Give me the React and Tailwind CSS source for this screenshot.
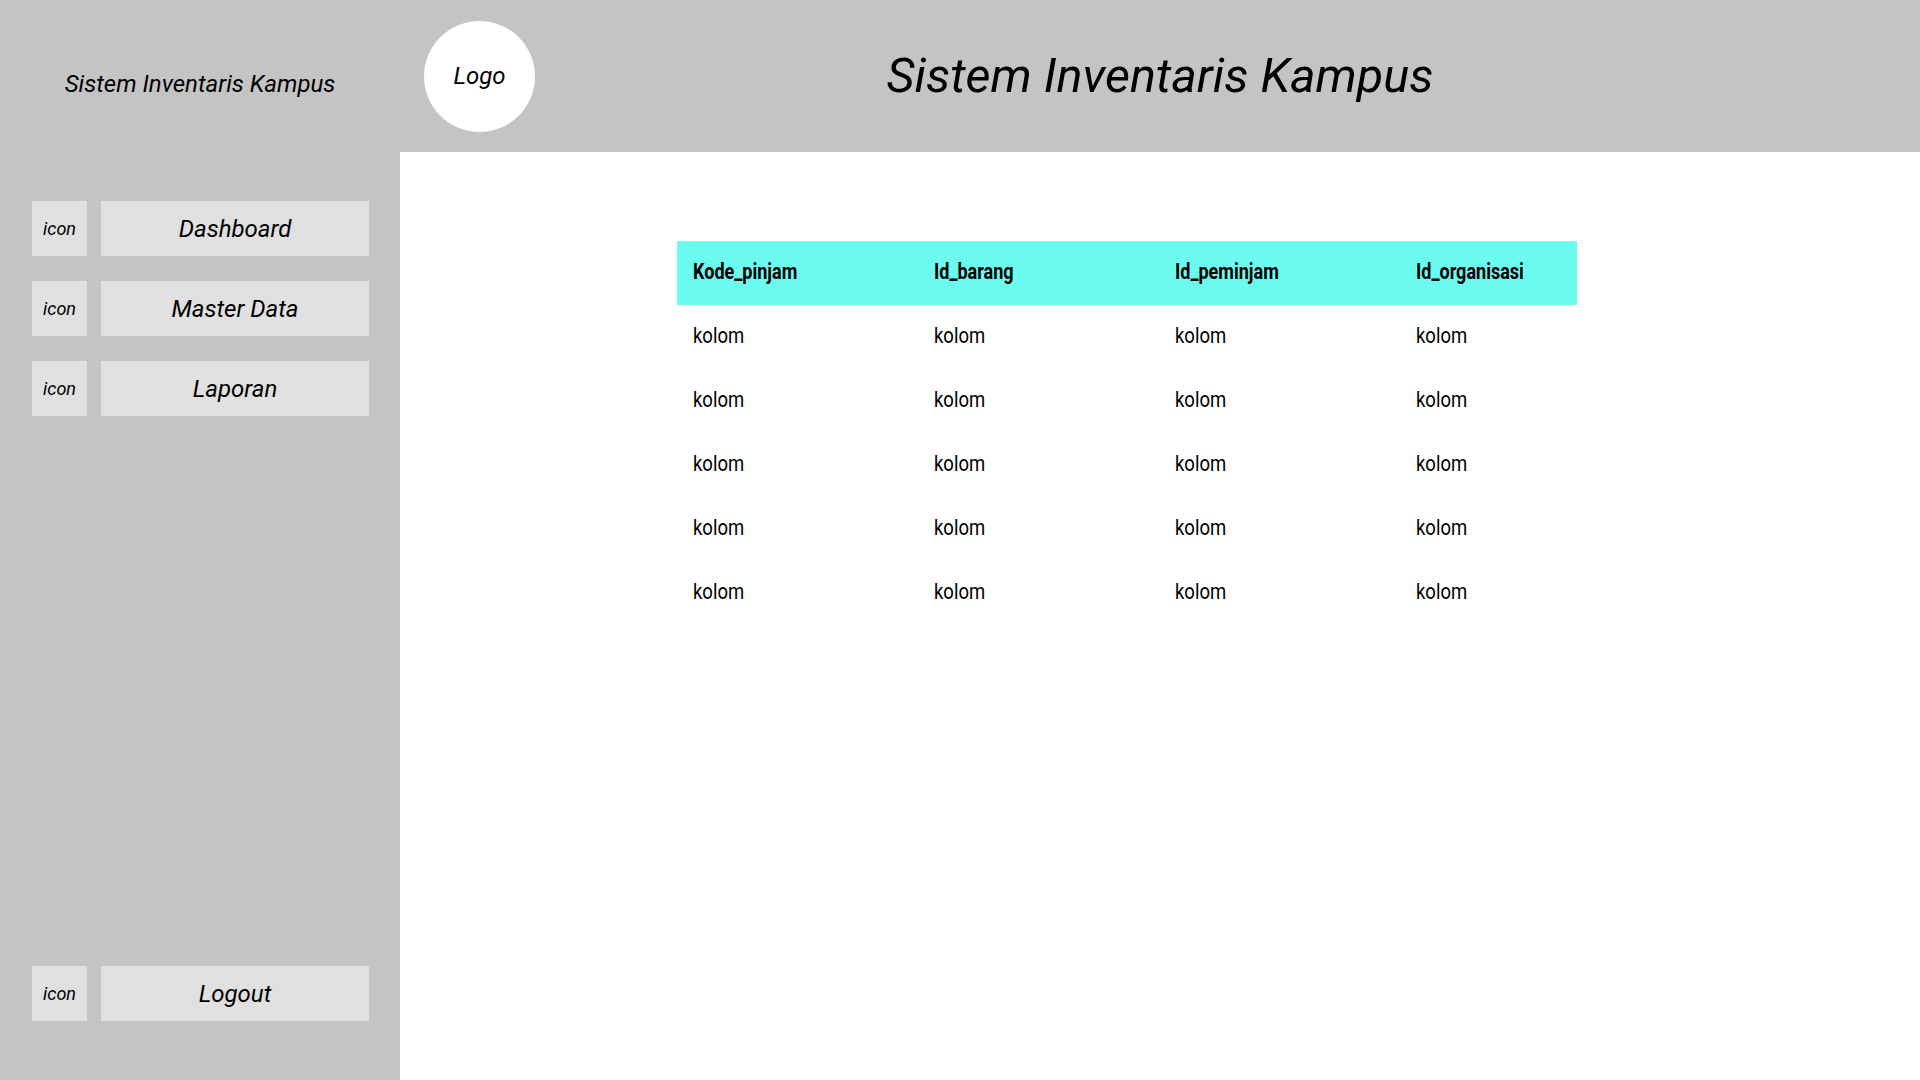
import React from 'react';

const menu = ['Dashboard', 'Master Data', 'Laporan'];
const kolomKolom = ['Kode_pinjam', 'Id_barang', 'Id_peminjam', 'Id_organisasi'];
const baris = [1, 2, 3, 4, 5];

function NavItem({ label }) {
  return (
    <div className="flex items-center gap-[14px]">
      <div className="w-[55px] h-[55px] bg-[#e0e0e0] flex items-center justify-center italic text-[18px] text-black">
        icon
      </div>
      <div className="w-[268px] h-[55px] bg-[#e0e0e0] flex items-center justify-center italic text-[24px] text-black">
        {label}
      </div>
    </div>
  );
}

export default function App() {
  return (
    <div
      className="flex w-full h-[1080px] overflow-hidden bg-white"
      style={{ fontFamily: 'Roboto, "Liberation Sans", sans-serif' }}
    >
      {/* Sidebar */}
      <aside className="w-[400px] shrink-0 h-full bg-[#c4c4c4] flex flex-col">
        <div className="h-[152px] flex items-center justify-center pt-[15px] italic text-[24px] text-black">
          Sistem Inventaris Kampus
        </div>
        <div className="flex flex-col gap-[25px] pl-[32px] pt-[49px]">
          {menu.map((m) => (
            <NavItem key={m} label={m} />
          ))}
        </div>
        <div className="mt-auto pl-[32px] pb-[59px]">
          <NavItem label="Logout" />
        </div>
      </aside>

      {/* Right side */}
      <div className="flex-1 flex flex-col">
        <header className="h-[152px] bg-[#c4c4c4] grid grid-cols-[1fr_auto_1fr] items-center">
          <div className="pl-[24px]">
            <div className="w-[111px] h-[111px] rounded-full bg-white flex items-center justify-center italic text-[24px] text-black">
              Logo
            </div>
          </div>
          <h1 className="italic text-[48.5px] text-black leading-none">Sistem Inventaris Kampus</h1>
          <div />
        </header>

        <main className="flex-1 bg-white pt-[89px] pl-[277px]">
          <table className="w-[900px] table-fixed border-collapse text-black">
            <colgroup>
              <col className="w-[241px]" />
              <col className="w-[241px]" />
              <col className="w-[241px]" />
              <col />
            </colgroup>
            <thead>
              <tr className="bg-[#6cfbef] h-[64px]">
                {kolomKolom.map((k) => (
                  <th key={k} className="text-left font-bold pl-[16px] whitespace-nowrap">
                    <span className="inline-block origin-left scale-x-[0.82] text-[22px] leading-none">{k}</span>
                  </th>
                ))}
              </tr>
            </thead>
            <tbody>
              {baris.map((b) => (
                <tr key={b} className="h-[64px]">
                  {kolomKolom.map((k) => (
                    <td key={k} className="text-left pl-[16px]">
                      <span className="inline-block origin-left scale-x-[0.84] text-[22px] leading-none">kolom</span>
                    </td>
                  ))}
                </tr>
              ))}
            </tbody>
          </table>
        </main>
      </div>
    </div>
  );
}
